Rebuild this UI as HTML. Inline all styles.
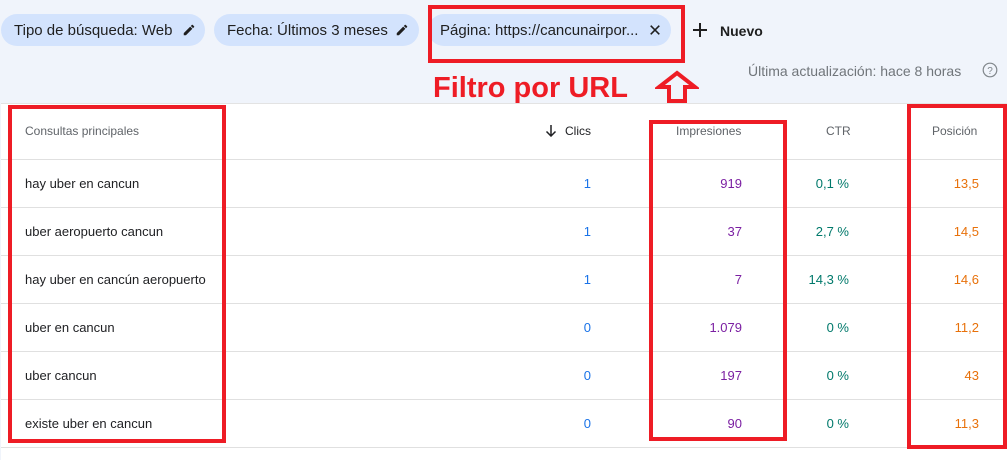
<!DOCTYPE html>
<html><head><meta charset="utf-8"><style>
*{margin:0;padding:0;box-sizing:border-box}
body{width:1007px;height:460px;background:#f0f4fb;font-family:"Liberation Sans",sans-serif;position:relative;overflow:hidden}
.chip{position:absolute;top:14px;height:32px;border-radius:16px;background:#d3e3fd;color:#1f1f1f;font-size:15px;line-height:34px;padding-left:13px}
.chip svg{position:absolute;top:9px}
.red{position:absolute;border:4px solid #ee1c25}
.tbl{position:absolute;left:1px;top:103px;width:1006px;height:357px;background:#fff;border-top:1px solid #e3e3e3}
.line{position:absolute;left:1px;width:1006px;height:1px;background:#e0e0e0}
.t{position:absolute;font-size:13px;color:#202124;line-height:16px}
.h{position:absolute;font-size:12px;color:#5f6368;line-height:16px}
.r{text-align:right;width:100px}
</style></head><body>
<div class="chip" style="left:1px;width:204px">Tipo de búsqueda: Web
<svg style="left:181px" width="14" height="14" viewBox="0 0 24 24"><path d="M3 17.25V21h3.75L17.8 9.94l-3.75-3.75L3 17.25zM20.7 7.04a1 1 0 000-1.41l-2.34-2.34a1 1 0 00-1.41 0l-1.83 1.83 3.75 3.75 1.83-1.83z" fill="#1f1f1f"/></svg></div>
<div class="chip" style="left:214px;width:205px">Fecha: Últimos 3 meses
<svg style="left:181px" width="14" height="14" viewBox="0 0 24 24"><path d="M3 17.25V21h3.75L17.8 9.94l-3.75-3.75L3 17.25zM20.7 7.04a1 1 0 000-1.41l-2.34-2.34a1 1 0 00-1.41 0l-1.83 1.83 3.75 3.75 1.83-1.83z" fill="#1f1f1f"/></svg></div>
<div class="chip" style="left:428px;width:243px;padding-left:12px">Página: https://cancunairpor...
<svg style="left:221px;top:10px" width="12" height="12" viewBox="0 0 14 14"><path d="M2 2L12 12M12 2L2 12" stroke="#1f1f1f" stroke-width="1.8"/></svg></div>
<svg style="position:absolute;left:692px;top:22px" width="16" height="16" viewBox="0 0 16 16"><path d="M8 1V15M1 8H15" stroke="#1f1f1f" stroke-width="2"/></svg>
<div style="position:absolute;left:720px;top:23px;font-size:14px;font-weight:bold;color:#1f1f1f">Nuevo</div>
<div style="position:absolute;left:748px;top:63px;font-size:14px;color:#70757a">Última actualización: hace 8 horas</div>
<svg style="position:absolute;left:982px;top:62px" width="16" height="16" viewBox="0 0 16 16"><circle cx="8" cy="8" r="6.8" fill="none" stroke="#80868b" stroke-width="1.2"/><text x="8" y="12" font-size="10" text-anchor="middle" fill="#80868b" font-family="Liberation Sans">?</text></svg>
<div style="position:absolute;left:433px;top:71px;font-size:29px;font-weight:bold;color:#ee1c25;font-family:'Liberation Sans',sans-serif;line-height:34px">Filtro por URL</div>
<svg style="position:absolute;left:655px;top:70px" width="44" height="34" viewBox="0 0 44 34"><path d="M22 3L40 17H30V31H14V17H4Z" fill="none" stroke="#ee1c25" stroke-width="4" stroke-linejoin="miter"/></svg>
<div class="tbl"></div>
<div class="line" style="top:159px"></div><div class="line" style="top:207px"></div><div class="line" style="top:255px"></div><div class="line" style="top:303px"></div><div class="line" style="top:351px"></div><div class="line" style="top:399px"></div><div class="line" style="top:447px"></div>
<div class="h" style="left:25px;top:123px">Consultas principales</div>
<svg style="position:absolute;left:545px;top:124px" width="12" height="13" viewBox="0 0 12 13"><path d="M6 1V12M1.5 7.5L6 12L10.5 7.5" fill="none" stroke="#202124" stroke-width="1.5"/></svg>
<div class="h" style="left:565px;top:123px;color:#202124">Clics</div>
<div class="h" style="left:676px;top:123px">Impresiones</div>
<div class="h" style="left:826px;top:123px">CTR</div>
<div class="h" style="left:932px;top:123px">Posición</div>
<div class="t" style="left:25px;top:176px">hay uber en cancun</div>
<div class="t" style="left:25px;top:224px">uber aeropuerto cancun</div>
<div class="t" style="left:25px;top:272px">hay uber en cancún aeropuerto</div>
<div class="t" style="left:25px;top:320px">uber en cancun</div>
<div class="t" style="left:25px;top:368px">uber cancun</div>
<div class="t" style="left:25px;top:416px">existe uber en cancun</div>
<div class="t r" style="left:491px;top:176px;color:#1a73e8">1</div>
<div class="t r" style="left:491px;top:224px;color:#1a73e8">1</div>
<div class="t r" style="left:491px;top:272px;color:#1a73e8">1</div>
<div class="t r" style="left:491px;top:320px;color:#1a73e8">0</div>
<div class="t r" style="left:491px;top:368px;color:#1a73e8">0</div>
<div class="t r" style="left:491px;top:416px;color:#1a73e8">0</div>
<div class="t r" style="left:642px;top:176px;color:#7b1fa2">919</div>
<div class="t r" style="left:642px;top:224px;color:#7b1fa2">37</div>
<div class="t r" style="left:642px;top:272px;color:#7b1fa2">7</div>
<div class="t r" style="left:642px;top:320px;color:#7b1fa2">1.079</div>
<div class="t r" style="left:642px;top:368px;color:#7b1fa2">197</div>
<div class="t r" style="left:642px;top:416px;color:#7b1fa2">90</div>
<div class="t r" style="left:749px;top:176px;color:#00796b">0,1 %</div>
<div class="t r" style="left:749px;top:224px;color:#00796b">2,7 %</div>
<div class="t r" style="left:749px;top:272px;color:#00796b">14,3 %</div>
<div class="t r" style="left:749px;top:320px;color:#00796b">0 %</div>
<div class="t r" style="left:749px;top:368px;color:#00796b">0 %</div>
<div class="t r" style="left:749px;top:416px;color:#00796b">0 %</div>
<div class="t r" style="left:879px;top:176px;color:#e8710a">13,5</div>
<div class="t r" style="left:879px;top:224px;color:#e8710a">14,5</div>
<div class="t r" style="left:879px;top:272px;color:#e8710a">14,6</div>
<div class="t r" style="left:879px;top:320px;color:#e8710a">11,2</div>
<div class="t r" style="left:879px;top:368px;color:#e8710a">43</div>
<div class="t r" style="left:879px;top:416px;color:#e8710a">11,3</div>
<div class="red" style="left:428px;top:5px;width:257px;height:58px"></div>
<div class="red" style="left:8px;top:105px;width:218px;height:338px"></div>
<div class="red" style="left:649px;top:120px;width:138px;height:321px"></div>
<div class="red" style="left:907px;top:104px;width:100px;height:345px"></div>
</body></html>
